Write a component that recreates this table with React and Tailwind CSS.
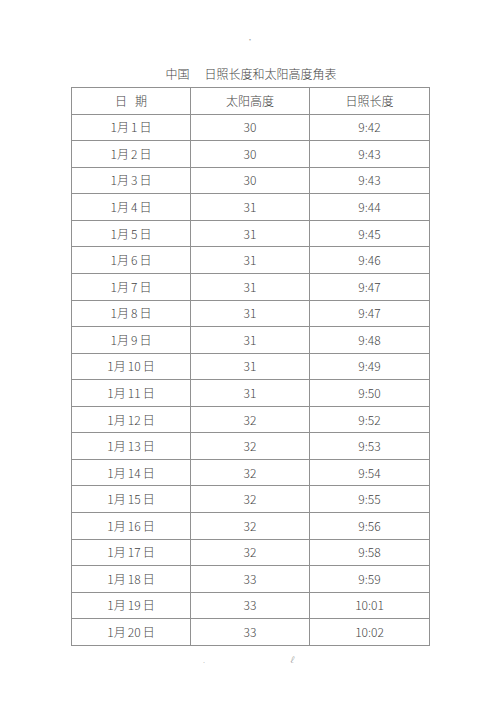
import React from "react";

const rows = [
  ["1月1日", "30", "9:42"],
  ["1月2日", "30", "9:43"],
  ["1月3日", "30", "9:43"],
  ["1月4日", "31", "9:44"],
  ["1月5日", "31", "9:45"],
  ["1月6日", "31", "9:46"],
  ["1月7日", "31", "9:47"],
  ["1月8日", "31", "9:47"],
  ["1月9日", "31", "9:48"],
  ["1月10日", "31", "9:49"],
  ["1月11日", "31", "9:50"],
  ["1月12日", "32", "9:52"],
  ["1月13日", "32", "9:53"],
  ["1月14日", "32", "9:54"],
  ["1月15日", "32", "9:55"],
  ["1月16日", "32", "9:56"],
  ["1月17日", "32", "9:58"],
  ["1月18日", "33", "9:59"],
  ["1月19日", "33", "10:01"],
  ["1月20日", "33", "10:02"],
];

function DateCell({ d }) {
  const m = d.match(/1月(\d+)日/);
  return (
    <span>
      1月<span className="mx-[2px]">{m[1]}</span>日
    </span>
  );
}

export default function App() {
  return (
    <div
      className="w-[500px] h-[707px] bg-white text-[#454545] font-light"
      style={{ fontFamily: '"Noto Sans CJK SC", "Noto Sans", sans-serif' }}
    >
      <div className="h-[36px]" />
      <div className="flex justify-center h-[8px] text-[8px] leading-[8px] text-[#aaa]">
        <span>·</span>
      </div>
      <div className="h-[20px]" />
      <div className="text-center text-[12px] leading-[20px] h-[23px] ml-[2px]">
        中国<span className="inline-block w-[15px]" />日照长度和太阳高度角表
      </div>
      <div className="pl-[71px]">
        <table className="w-[359px] border-collapse text-[12px] text-center">
          <tbody>
            <tr className="h-[26.57px]">
              <td className="border border-[#919191] w-[119px]">日<span className="inline-block w-[8px]" />期</td>
              <td className="border border-[#919191] w-[119px]">太阳高度</td>
              <td className="border border-[#919191]">日照长度</td>
            </tr>
            {rows.map((r) => (
              <tr key={r[0]} className="h-[26.57px]">
                <td className="border border-[#919191]"><DateCell d={r[0]} /></td>
                <td className="border border-[#919191]">{r[1]}</td>
                <td className="border border-[#919191]">{r[2]}</td>
              </tr>
            ))}
          </tbody>
        </table>
      </div>
      <div className="flex h-[20px] text-[8px] text-[#999] mt-[8px]">
        <span className="ml-[203px]">.</span>
        <span className="ml-[85px] italic">ℓ</span>
      </div>
    </div>
  );
}
